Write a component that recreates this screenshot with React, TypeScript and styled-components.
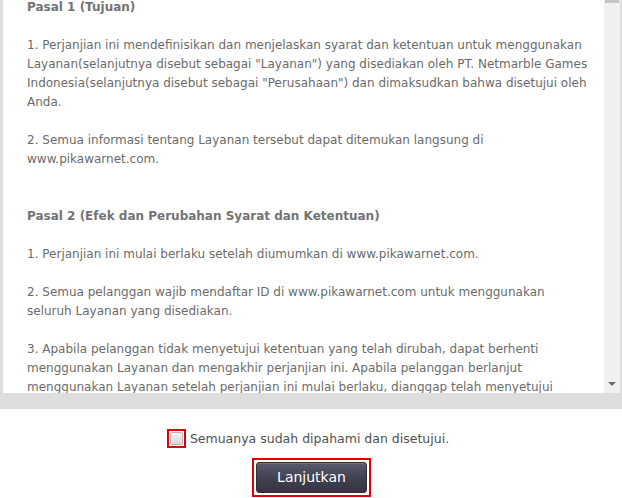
import React, { useState } from 'react';
import styled, { createGlobalStyle } from 'styled-components';

const GlobalStyle = createGlobalStyle`
  html, body {
    margin: 0;
    padding: 0;
    background: #ffffff;
  }
  body {
    font-family: 'DejaVu Sans', Verdana, sans-serif;
  }
`;

const Page = styled.div`
  width: 622px;
  height: 498px;
  display: flex;
  flex-direction: column;
  overflow: hidden;
`;

const Frame = styled.div`
  background: #dedede;
  padding: 0 2px 16px 3px;
`;

const TermsBox = styled.div`
  height: 393px;
  background: #ffffff;
  display: flex;
  overflow: hidden;
`;

const TermsText = styled.div`
  flex: 1;
  padding: 0 0 0 24px;
  margin-top: -2px;
  font-size: 12px;
  line-height: 19px;
  color: #6b6b6b;
  white-space: nowrap;
  overflow: hidden;
`;

const Section = styled.div`
  margin-bottom: 38px;
`;

const Heading = styled.div`
  font-weight: bold;
  color: #737373;
  margin-bottom: 19px;
`;

const Para = styled.div`
  margin-bottom: 19px;
`;

const Line = styled.div``;

const ScrollTrack = styled.div`
  width: 16px;
  flex-shrink: 0;
  background: #f0f0f0;
  position: relative;
`;

const Thumb = styled.div`
  height: 3px;
  margin: 0 1px;
  background: #c4c4c4;
`;

const DownArrow = styled.div`
  position: absolute;
  left: 4px;
  bottom: 7px;
  width: 0;
  height: 0;
  border-left: 4px solid transparent;
  border-right: 4px solid transparent;
  border-top: 4px solid #6c6c6c;
`;

const Footer = styled.div`
  flex: 1;
  display: flex;
  flex-direction: column;
  align-items: center;
  padding-top: 20px;
`;

const AgreeRow = styled.label`
  display: flex;
  align-items: center;
  gap: 4px;
  font-size: 12.5px;
  color: #505050;
  cursor: pointer;
  margin-left: -6px;
`;

const CheckOutline = styled.span`
  display: inline-flex;
  align-items: center;
  justify-content: center;
  width: 15px;
  height: 15px;
  border: 2px solid #e00000;
`;

const CheckBox = styled.span<{ checked: boolean }>`
  width: 11px;
  height: 11px;
  border: 1px solid #b5b5b5;
  border-radius: 2px;
  background: ${({ checked }) =>
    checked ? '#4a4a62' : 'linear-gradient(#f2f2f2, #d9d9d9)'};
`;

const ButtonOutline = styled.div`
  margin-top: 10px;
  margin-left: 1px;
  border: 2px solid #e00000;
  padding: 2px;
`;

const Button = styled.button`
  width: 111px;
  height: 31px;
  border: 1px solid #2e2e3c;
  border-radius: 3px;
  background: linear-gradient(#5a5a6e, #40404f 55%, #353544);
  color: #ffffff;
  font-family: 'DejaVu Sans', Verdana, sans-serif;
  font-size: 14px;
  padding: 0 0 1px;
  box-shadow: inset 0 1px 0 rgba(255, 255, 255, 0.15);
  cursor: pointer;
`;

const sections = [
  {
    title: 'Pasal 1 (Tujuan)',
    paras: [
      [
        '1. Perjanjian ini mendefinisikan dan menjelaskan syarat dan ketentuan untuk menggunakan',
        'Layanan(selanjutnya disebut sebagai "Layanan") yang disediakan oleh PT. Netmarble Games',
        'Indonesia(selanjutnya disebut sebagai "Perusahaan") dan dimaksudkan bahwa disetujui oleh',
        'Anda.',
      ],
      [
        '2. Semua informasi tentang Layanan tersebut dapat ditemukan langsung di',
        'www.pikawarnet.com.',
      ],
    ],
  },
  {
    title: 'Pasal 2 (Efek dan Perubahan Syarat dan Ketentuan)',
    paras: [
      ['1. Perjanjian ini mulai berlaku setelah diumumkan di www.pikawarnet.com.'],
      [
        '2. Semua pelanggan wajib mendaftar ID di www.pikawarnet.com untuk menggunakan',
        'seluruh Layanan yang disediakan.',
      ],
      [
        '3. Apabila pelanggan tidak menyetujui ketentuan yang telah dirubah, dapat berhenti',
        'menggunakan Layanan dan mengakhir perjanjian ini. Apabila pelanggan berlanjut',
        'menggunakan Layanan setelah perjanjian ini mulai berlaku, dianggap telah menyetujui',
      ],
    ],
  },
];

function App() {
  const [agree, setAgree] = useState(false);

  return (
    <Page>
      <GlobalStyle />
      <Frame>
        <TermsBox>
          <TermsText>
            {sections.map((s) => (
              <Section key={s.title}>
                <Heading>{s.title}</Heading>
                {s.paras.map((p, i) => (
                  <Para key={i}>
                    {p.map((l) => (
                      <Line key={l}>{l}</Line>
                    ))}
                  </Para>
                ))}
              </Section>
            ))}
          </TermsText>
          <ScrollTrack>
            <Thumb />
            <DownArrow />
          </ScrollTrack>
        </TermsBox>
      </Frame>
      <Footer>
        <AgreeRow onClick={() => setAgree((prev) => !prev)}>
          <CheckOutline>
            <CheckBox checked={agree} />
          </CheckOutline>
          Semuanya sudah dipahami dan disetujui.
        </AgreeRow>
        <ButtonOutline>
          <Button type="button">Lanjutkan</Button>
        </ButtonOutline>
      </Footer>
    </Page>
  );
}

export default App;
